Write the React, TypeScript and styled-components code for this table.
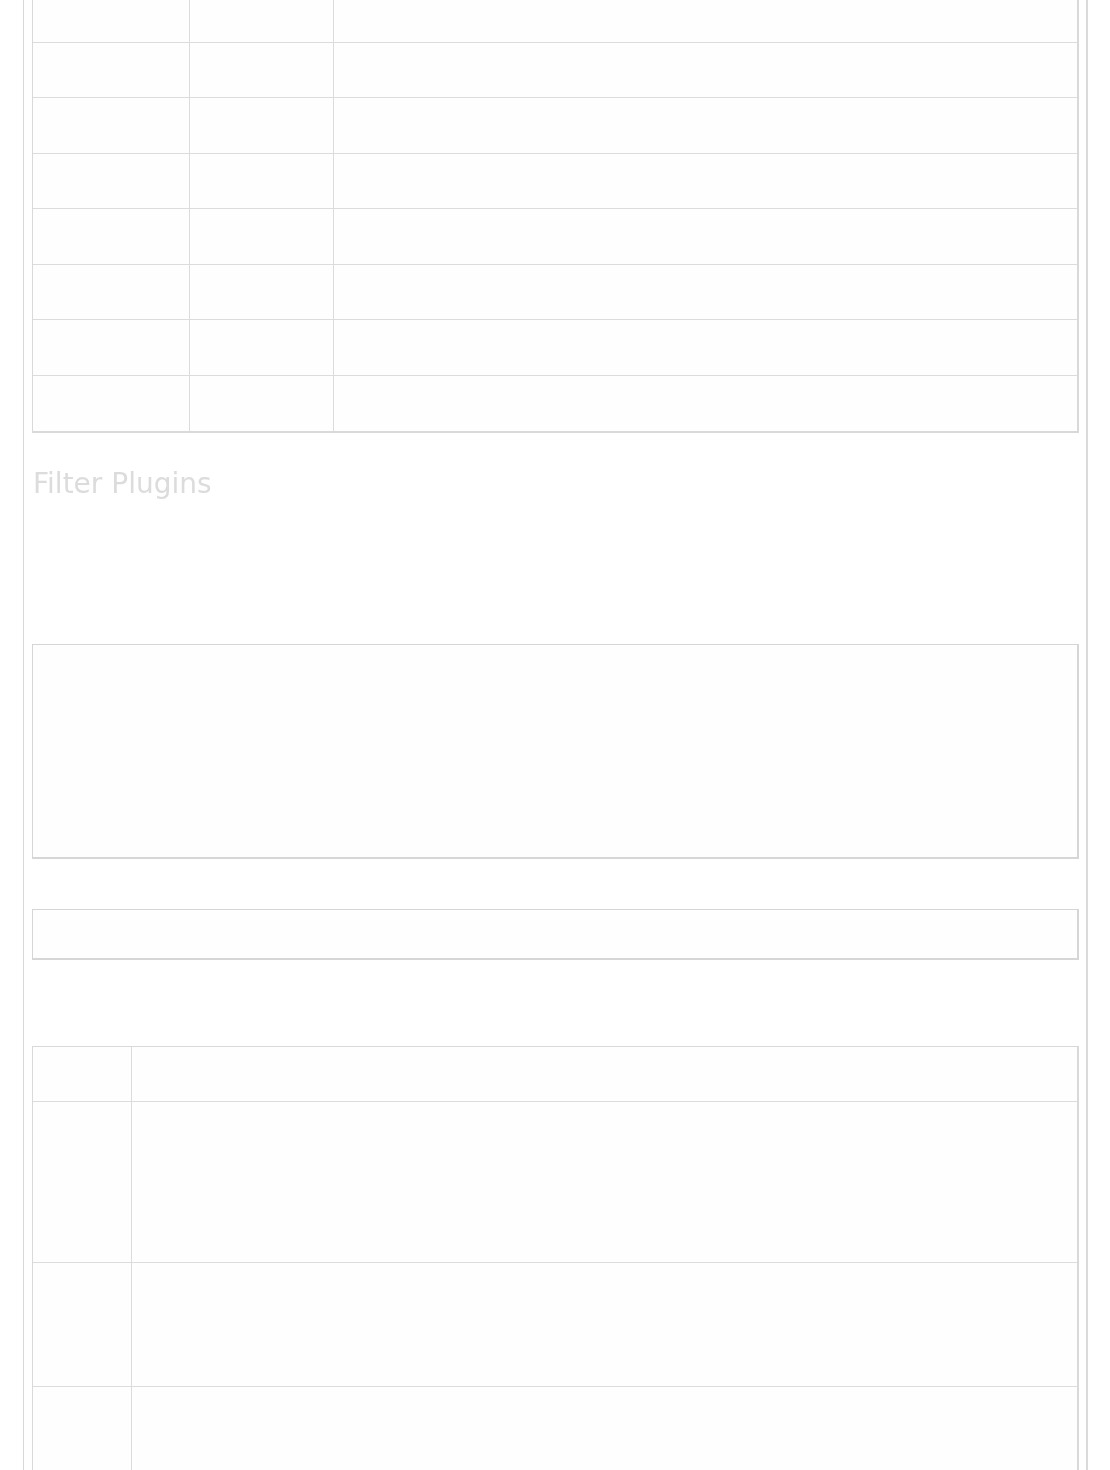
import { Fragment } from 'react';
import styled, { createGlobalStyle } from 'styled-components';

const Global = createGlobalStyle`
  html, body {
    margin: 0;
    background: #ffffff;
    font-family: "DejaVu Sans", Verdana, sans-serif;
  }
`

const Page = styled.main`
  box-sizing: border-box;
  width: 1065px;
  min-height: 1490px;
  margin: -14px 0 0 23px;
  padding: 0 7px 0 8px;
  border-left: 1px solid #d8d8d8;
  border-right: 2px solid #dadada;
  overflow: hidden;
`

const Grid = styled.div<{ $cols: string }>`
  display: grid;
  grid-template-columns: ${p => p.$cols};
  border: 1px solid #d9d9d9;
  border-right-width: 2px;
  border-bottom-width: 2px;
  background: #fefefe;
`

const Cell = styled.div<{ $h: number; $last?: boolean; $bottom?: boolean }>`
  height: ${p => p.$h}px;
  border-bottom: ${p => (p.$bottom ? 'none' : '1px solid #dcdcdc')};
  border-right: ${p => (p.$last ? 'none' : '1px solid #dcdcdc')};
  box-sizing: border-box;
`

const Heading = styled.h2`
  margin: 35px 0 0 1px;
  font-size: 28px;
  font-weight: normal;
  line-height: 32px;
  color: #dcdcdc;
  filter: blur(0.7px);
`

const Box = styled.div<{ $h: number; $top: number }>`
  box-sizing: border-box;
  height: ${p => p.$h}px;
  margin-top: ${p => p.$top}px;
  border: 1px solid #d6d6d6;
  border-right-width: 2px;
  border-bottom-width: 2px;
  background: #fefefe;
`

const DetailGrid = styled(Grid)`
  margin-top: 86px;
`

const topRows = [56, 55, 56, 55, 56, 55, 56, 55]
const lowerRows = [55, 161, 124, 120]

export default function App() {
  return (
    <>
      <Global />
      <Page>
        <Grid $cols="157px 144px 1fr">
          {topRows.map((h, i) => {
            const end = i === topRows.length - 1
            return (
              <Fragment key={i}>
                <Cell $h={h} $bottom={end} />
                <Cell $h={h} $bottom={end} />
                <Cell $h={h} $bottom={end} $last />
              </Fragment>
            )
          })}
        </Grid>
        <Heading>Filter Plugins</Heading>
        <Box $h={215} $top={144} />
        <Box $h={51} $top={50} />
        <DetailGrid $cols="99px 1fr">
          {lowerRows.map((h, i) => {
            const end = i === lowerRows.length - 1
            return (
              <Fragment key={i}>
                <Cell $h={h} $bottom={end} />
                <Cell $h={h} $bottom={end} $last />
              </Fragment>
            )
          })}
        </DetailGrid>
      </Page>
    </>
  )
}
